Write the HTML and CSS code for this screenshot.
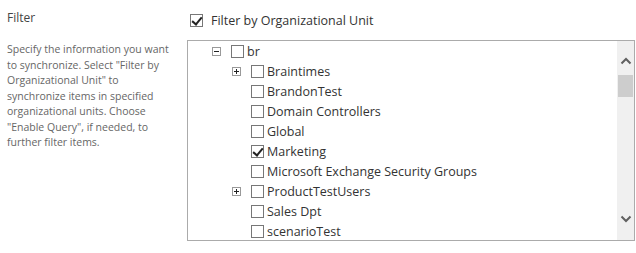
FILE: index.html
```html
<!DOCTYPE html>
<html>
<head>
<meta charset="utf-8">
<link rel="stylesheet" href="styles.css">
</head>
<body>
<div class="section">
  <div class="desc-col">
    <div class="title">Filter</div>
    <p class="desc">Specify the information you want to synchronize. Select "Filter by Organizational Unit" to synchronize items in specified organizational units. Choose "Enable Query", if needed, to further filter items.</p>
  </div>
  <div class="field-col">
    <label class="main-check"><span class="cb checked"></span><span>Filter by Organizational Unit</span></label>
    <div class="treebox">
      <div class="tree">
        <div class="row lvl0"><span class="exp minus"></span><span class="cb"></span><span class="txt">br</span></div>
        <div class="row lvl1"><span class="exp plus"></span><span class="cb"></span><span class="txt">Braintimes</span></div>
        <div class="row lvl1"><span class="exp none"></span><span class="cb"></span><span class="txt">BrandonTest</span></div>
        <div class="row lvl1"><span class="exp none"></span><span class="cb"></span><span class="txt">Domain Controllers</span></div>
        <div class="row lvl1"><span class="exp none"></span><span class="cb"></span><span class="txt">Global</span></div>
        <div class="row lvl1"><span class="exp none"></span><span class="cb checked"></span><span class="txt">Marketing</span></div>
        <div class="row lvl1"><span class="exp none"></span><span class="cb"></span><span class="txt">Microsoft Exchange Security Groups</span></div>
        <div class="row lvl1"><span class="exp plus"></span><span class="cb"></span><span class="txt">ProductTestUsers</span></div>
        <div class="row lvl1"><span class="exp none"></span><span class="cb"></span><span class="txt">Sales Dpt</span></div>
        <div class="row lvl1"><span class="exp none"></span><span class="cb"></span><span class="txt">scenarioTest</span></div>
      </div>
      <div class="scrollbar">
        <svg class="arrow" width="12" height="8" viewBox="0 0 12 8"><path d="M1.5 6.5 L6 2 L10.5 6.5" fill="none" stroke="#606060" stroke-width="2"/></svg>
        <div class="thumb"></div>
        <div class="track"></div>
        <svg class="arrow" width="12" height="8" viewBox="0 0 12 8"><path d="M1.5 1.5 L6 6 L10.5 1.5" fill="none" stroke="#606060" stroke-width="2"/></svg>
      </div>
    </div>
  </div>
</div>
</body>
</html>
```

FILE: styles.css
```css
html, body {
  margin: 0;
  padding: 0;
  background: #fff;
}
body {
  font-family: "Open Sans", "Noto Sans", sans-serif;
  color: #444;
}
.section {
  display: flex;
  width: 636px;
  height: 253px;
}
.desc-col {
  width: 180px;
  padding-left: 7px;
  box-sizing: border-box;
}
.title {
  font-size: 12px;
  color: #444;
  margin-top: 10px;
  line-height: 16px;
}
.desc {
  margin: 16px 0 0 0;
  font-size: 10.5px;
  line-height: 15.5px;
  color: #666;
  width: 165px;
}
.field-col {
  margin-left: 7px;
  display: flex;
  flex-direction: column;
}
.main-check {
  display: flex;
  align-items: center;
  gap: 8px;
  margin-top: 13px;
  margin-left: 3px;
  font-size: 12.5px;
  color: #333;
  height: 14px;
}
.cb {
  width: 11px;
  height: 11px;
  border: 1px solid #777;
  background: #fff;
  flex: none;
  position: relative;
}
.cb.checked::after {
  content: "";
  position: absolute;
  left: 3px;
  top: 0px;
  width: 4px;
  height: 8px;
  border: solid #222;
  border-width: 0 2px 2px 0;
  transform: rotate(40deg);
}
.treebox {
  margin-top: 13px;
  width: 448px;
  height: 201px;
  border: 1px solid #ababab;
  box-sizing: border-box;
  display: flex;
  overflow: hidden;
}
.tree {
  flex: 1;
  overflow: hidden;
}
.row {
  height: 20px;
  display: flex;
  align-items: center;
  font-size: 12.5px;
  color: #333;
  white-space: nowrap;
}
.row.lvl0 { padding-left: 24px; }
.row.lvl1 { padding-left: 44px; }
.exp {
  width: 7px;
  height: 7px;
  border: 1px solid #999;
  margin-right: 10px;
  flex: none;
  position: relative;
}
.exp.none { border-color: transparent; }
.exp.minus::before, .exp.plus::before {
  content: "";
  position: absolute;
  left: 1px;
  top: 3px;
  width: 5px;
  height: 1px;
  background: #222;
}
.exp.plus::after {
  content: "";
  position: absolute;
  left: 3px;
  top: 1px;
  width: 1px;
  height: 5px;
  background: #222;
}
.txt {
  margin-left: 3px;
}
.scrollbar {
  width: 17px;
  background: #f0f0f0;
  display: flex;
  flex-direction: column;
  align-items: center;
  flex: none;
}
.arrow {
  display: block;
  margin-top: 16px;
  flex: none;
}
.thumb {
  width: 15px;
  height: 22px;
  background: #cdcdcd;
  margin-top: 10px;
  flex: none;
}
.track { flex: 1; }
.scrollbar .arrow:last-child {
  margin-top: 0;
  margin-bottom: 17px;
}
```
